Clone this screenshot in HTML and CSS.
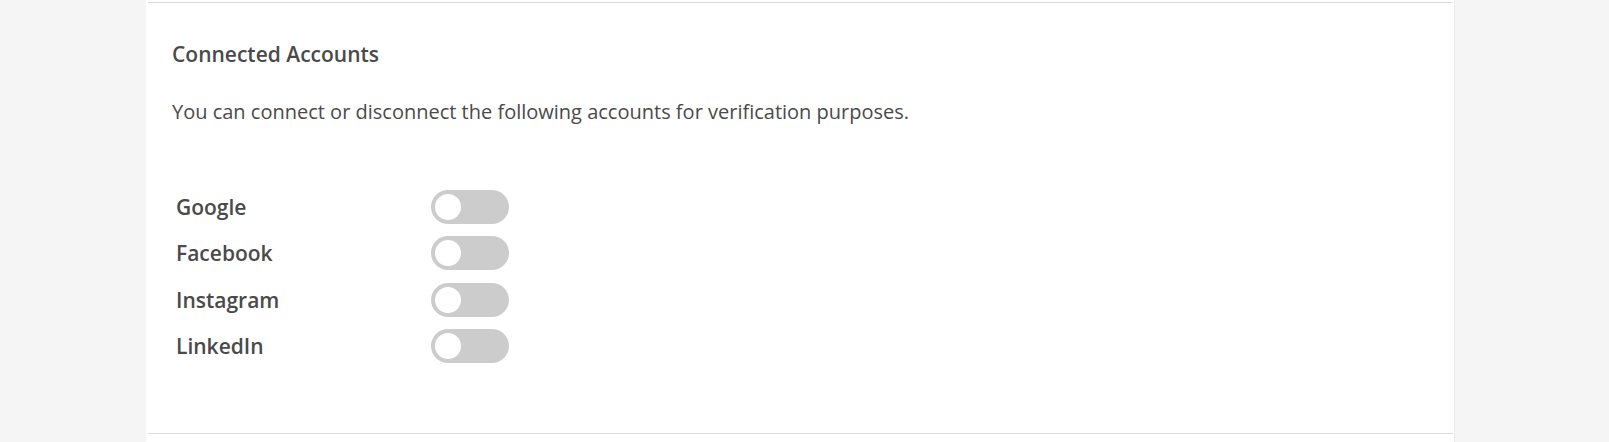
FILE: index.html
```html
<!DOCTYPE html>
<html lang="en">
<head>
<meta charset="utf-8">
<title>Connected Accounts</title>
<link rel="stylesheet" href="styles.css">
</head>
<body>
<div class="panel">
  <section class="section">
    <h2 class="title">Connected Accounts</h2>
    <p class="desc">You can connect or disconnect the following accounts for verification purposes.</p>
    <ul class="accounts">
      <li class="account"><span class="account-name">Google</span><span class="toggle"><span class="knob"></span></span></li>
      <li class="account"><span class="account-name">Facebook</span><span class="toggle"><span class="knob"></span></span></li>
      <li class="account"><span class="account-name">Instagram</span><span class="toggle"><span class="knob"></span></span></li>
      <li class="account"><span class="account-name">LinkedIn</span><span class="toggle"><span class="knob"></span></span></li>
    </ul>
  </section>
</div>
</body>
</html>
```

FILE: styles.css
```css
html, body {
  margin: 0;
  padding: 0;
}

body {
  background: #f5f5f5;
  font-family: "Open Sans", "Noto Sans", "Liberation Sans", sans-serif;
  color: #4a4a4a;
}

.panel {
  width: 1308px;
  min-height: 100vh;
  margin-left: 146px;
  background: #ffffff;
  box-shadow: 1px 0 0 #ececec;
  overflow: hidden;
}

.section {
  margin: 2px 1px 0 2px;
  border-top: 1px solid #dcdcdc;
  border-bottom: 1px solid #dcdcdc;
  padding: 39px 0 70px 24px;
}

.title {
  margin: 0 0 33px;
  font-size: 21px;
  line-height: 25px;
  font-weight: 600;
  color: #4a4a4a;
}

.desc {
  margin: 0 0 66px;
  font-size: 20px;
  line-height: 24px;
  font-weight: 400;
  color: #4a4a4a;
}

.accounts {
  list-style: none;
  margin: 0;
  padding: 0 0 0 4px;
  display: flex;
  flex-direction: column;
  gap: 12.4px;
}

.account {
  display: flex;
  align-items: flex-start;
  height: 34px;
}

.account-name {
  width: 255px;
  padding-top: 2px;
  font-size: 21px;
  line-height: 30px;
  font-weight: 600;
  color: #4a4a4a;
}

.toggle {
  width: 78px;
  height: 34px;
  border-radius: 17px;
  background: #cccccc;
  display: flex;
  align-items: center;
  padding: 0 4px;
  box-sizing: border-box;
}

.knob {
  width: 26px;
  height: 26px;
  border-radius: 50%;
  background: #ffffff;
}
```
